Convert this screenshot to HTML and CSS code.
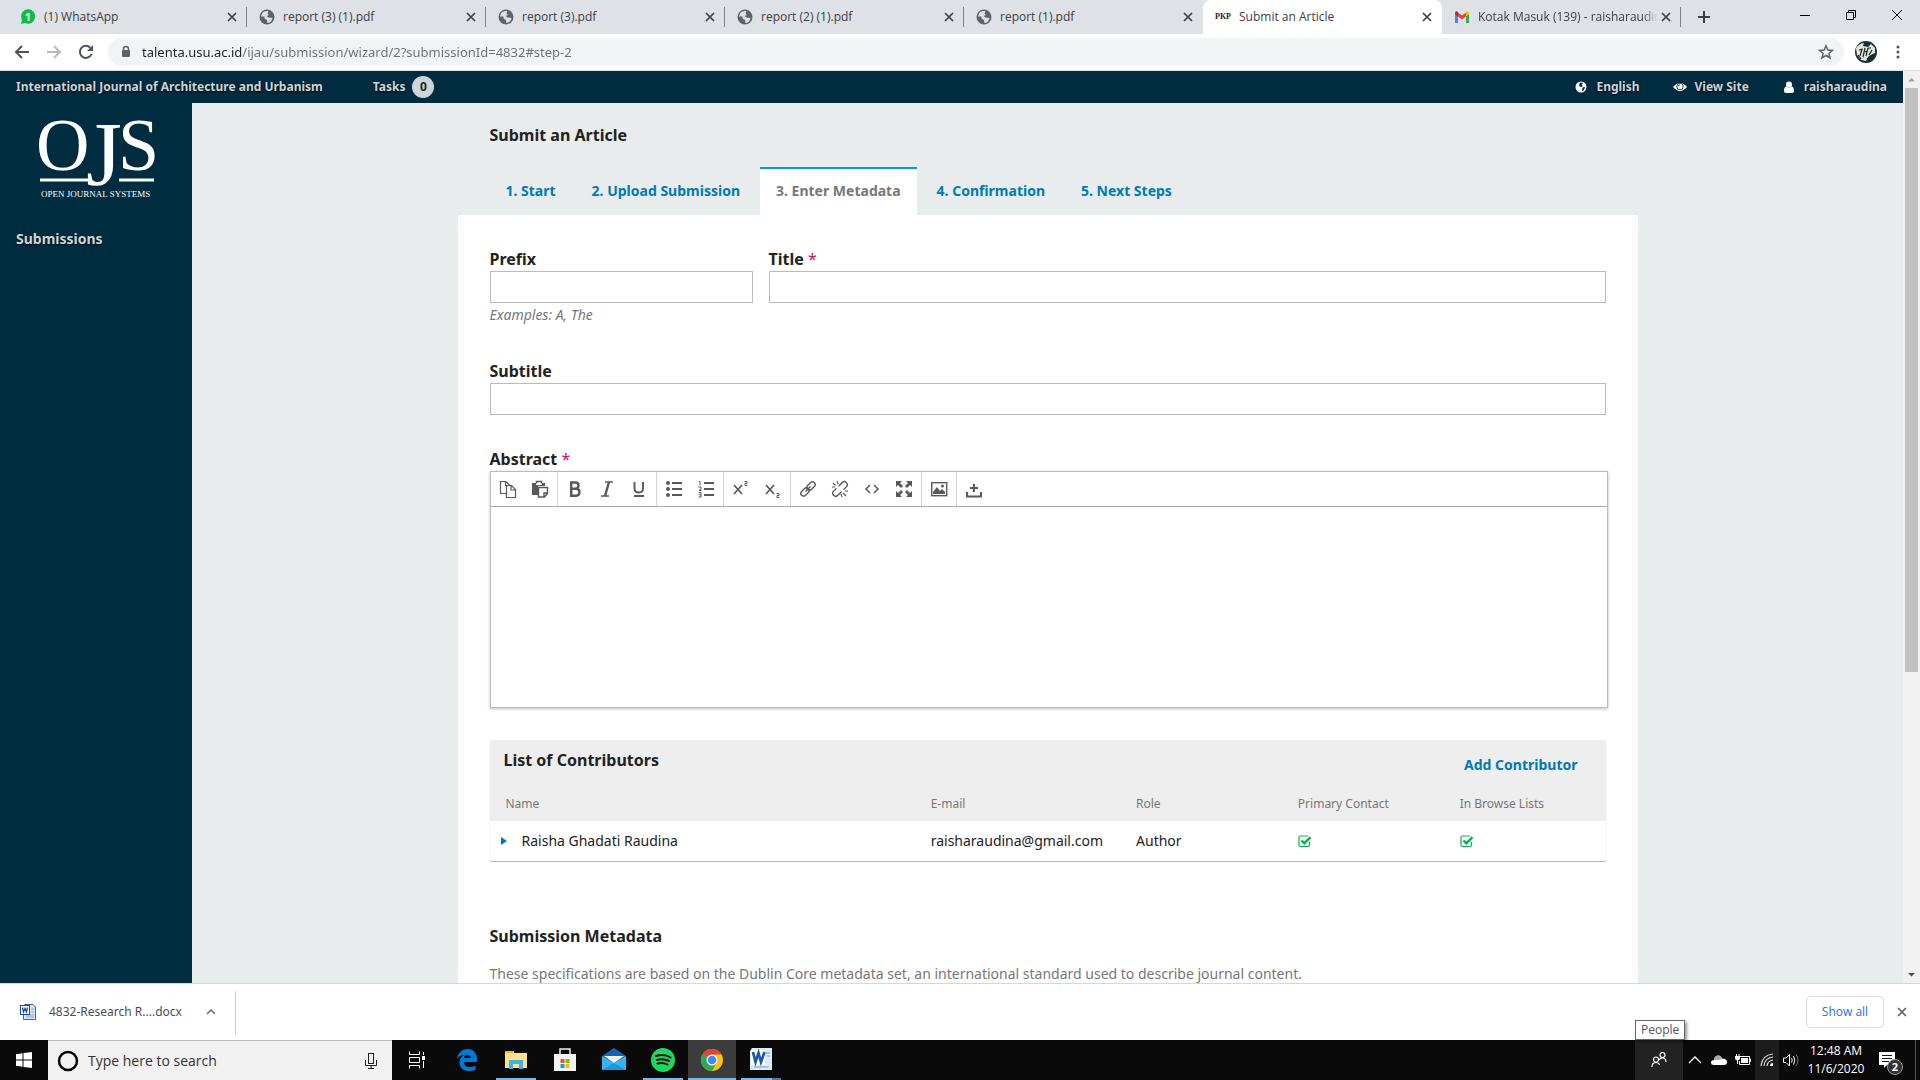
FILE: index.html
```html
<!DOCTYPE html>
<html lang="en">
<head>
<meta charset="utf-8">
<title>Submit an Article</title>
<link rel="stylesheet" href="styles.css">
</head>
<body>
<svg class="defs" aria-hidden="true">
  <symbol id="globe" viewBox="0 0 16 16"><circle cx="8" cy="8" r="7.5" fill="#5f6368"/><path d="M3 4.500C5 2 8 1.500 9.500 2.500L8.500 4.500 10 6 7.500 7 9.500 8.500 13.500 9C13 12 11 14 8.500 14L8 11 5.500 9.500 5.500 7.500 2 7.500Z" fill="#dee1e6"/></symbol>
  <symbol id="close" viewBox="0 0 10 10"><path d="M1 1 9 9M9 1 1 9" stroke="currentColor" stroke-width="1.7" fill="none"/></symbol>
</svg>

<header class="browser">
  <div class="tabstrip">
    <div class="tab">
      <svg class="fav" viewBox="0 0 16 16"><path d="M1 15 2 11A7 7.300 0 1 1 5 14Z" fill="#0bc143"/><text x="8" y="12" text-anchor="middle" class="fav-one">1</text></svg>
      <span class="tab-title">(1) WhatsApp</span><button class="tab-close" aria-label="Close tab"><svg><use href="#close"/></svg></button>
    </div>
    <div class="tab"><svg class="fav"><use href="#globe"/></svg><span class="tab-title">report (3) (1).pdf</span><button class="tab-close" aria-label="Close tab"><svg><use href="#close"/></svg></button></div>
    <div class="tab"><svg class="fav"><use href="#globe"/></svg><span class="tab-title">report (3).pdf</span><button class="tab-close" aria-label="Close tab"><svg><use href="#close"/></svg></button></div>
    <div class="tab"><svg class="fav"><use href="#globe"/></svg><span class="tab-title">report (2) (1).pdf</span><button class="tab-close" aria-label="Close tab"><svg><use href="#close"/></svg></button></div>
    <div class="tab before-active"><svg class="fav"><use href="#globe"/></svg><span class="tab-title">report (1).pdf</span><button class="tab-close" aria-label="Close tab"><svg><use href="#close"/></svg></button></div>
    <div class="tab active"><span class="fav fav-pkp">PKP</span><span class="tab-title">Submit an Article</span><button class="tab-close" aria-label="Close tab"><svg><use href="#close"/></svg></button></div>
    <div class="tab">
      <svg class="fav" viewBox="0 0 16 16"><path d="M1 3.500V14H4V7L1 4Z" fill="#4285f4"/><path d="M12 7V14H15V4Z" fill="#34a853"/><path d="M4 3.500 8 6.500 12 3.500V7.500L8 10.500 4 7.500Z" fill="#ea4335"/><path d="M1 4.500C1 2 3 1.800 4 3.200V7.500L1 5.300Z" fill="#c5221f"/><path d="M15 4.500C15 2 13 1.800 12 3.200V7.500L15 5.300Z" fill="#fbbc04"/></svg>
      <span class="tab-title fade">Kotak Masuk (139) - raisharaudin</span><button class="tab-close" aria-label="Close tab"><svg><use href="#close"/></svg></button>
    </div>
    <button class="new-tab" aria-label="New tab"><svg viewBox="0 0 14 14"><path d="M7 1V13M1 7H13" stroke="#3c4043" stroke-width="2"/></svg></button>
    <div class="window-controls">
      <button aria-label="Minimize"><svg viewBox="0 0 12 12"><path d="M1 6.500H11" stroke="#000"/></svg></button>
      <button aria-label="Restore"><svg viewBox="0 0 12 12"><path d="M1.500 3.500H8.500V10.500H1.500ZM3.500 3.500V1.500H10.500V8.500H8.500" fill="none" stroke="#000"/></svg></button>
      <button aria-label="Close"><svg viewBox="0 0 12 12"><path d="M1 1 11 11M11 1 1 11" stroke="#000"/></svg></button>
    </div>
  </div>
  <div class="toolbar">
    <button class="nav-btn" aria-label="Back"><svg viewBox="0 0 16 16"><path d="M15 8H2M8 2 2 8 8 14" fill="none" stroke="#50545a" stroke-width="2"/></svg></button>
    <button class="nav-btn" aria-label="Forward"><svg viewBox="0 0 16 16"><path d="M1 8H14M8 2 14 8 8 14" fill="none" stroke="#b9bbbe" stroke-width="2"/></svg></button>
    <button class="nav-btn" aria-label="Reload"><svg viewBox="0 0 16 16"><path d="M13.500 10A6 6 0 1 1 12.300 3.800" fill="none" stroke="#50545a" stroke-width="2"/><path d="M15 1V7H9Z" fill="#50545a"/></svg></button>
    <div class="omnibox">
      <svg class="lock" viewBox="0 0 10 14"><path d="M2.500 6V4A2.500 2.500 0 0 1 7.500 4V6" fill="none" stroke="#5f6368" stroke-width="1.500"/><rect x="1" y="5" width="8" height="7" rx="1" fill="#5f6368"/></svg>
      <input class="url" type="text" aria-label="Address" value="talenta.usu.ac.id/ijau/submission/wizard/2?submissionId=4832#step-2">
      <button class="star" aria-label="Bookmark"><svg viewBox="0 0 16 16"><path d="M8 1.800 9.800 6 14.400 6.400 10.900 9.400 12 14 8 11.500 4 14 5.100 9.400 1.600 6.400 6.200 6Z" fill="none" stroke="#5f6368" stroke-width="1.500"/></svg></button>
    </div>
    <button class="avatar" aria-label="Profile"><svg viewBox="0 0 22 22"><circle cx="11" cy="11" r="11" fill="#16303a"/><path d="M1 7Q5 2 9 2L8 5 13 6 16 3 20 7 20 12 14 15 11 20 6 19 2 14Z" fill="#e6e6d6"/><path d="M4 9 8 8M7 8 5 15M10 7 8 16M10 11 12 10M13 7 11 15M13 7 16 7M17 9 14 14M3 14 6 18M12 18 19 13" stroke="#17262d" stroke-width="1.200" fill="none"/></svg></button>
    <button class="menu" aria-label="Menu"><svg viewBox="0 0 4 16"><circle cx="2" cy="3" r="1.500"/><circle cx="2" cy="8" r="1.500"/><circle cx="2" cy="13" r="1.500"/></svg></button>
  </div>
</header>

<div class="viewport">
  <div class="page">
    <nav class="site-nav">
      <a href="#" class="journal">International Journal of Architecture and Urbanism</a>
      <a href="#" class="tasks">Tasks <span class="count">0</span></a>
      <div class="user-nav">
        <a href="#"><svg viewBox="0 0 12 12"><circle cx="6" cy="6" r="5.500" fill="#fff"/><path d="M5 1.500 8 2 6.500 4 8 5 6 6 4 5ZM7.500 6.500 10 6 9 9 7 10.500Z" fill="#002c40"/></svg>English</a>
        <a href="#"><svg viewBox="0 0 14 12"><path d="M0 6Q7-2 14 6 7 14 0 6Z" fill="#fff"/><circle cx="7" cy="5.500" r="3.500" fill="#002c40"/><circle cx="7" cy="5.500" r="2.700" fill="#fff"/><path d="M5.300 5.500A1.700 1.700 0 0 1 7 3.800" stroke="#002c40" fill="none" stroke-width=".7"/></svg>View Site</a>
        <a href="#"><svg viewBox="0 0 10 12"><circle cx="5" cy="3.500" r="3" fill="#fff"/><path d="M0 10Q0 5.500 2.500 5.500 5 7.500 7.500 5.500 10 5.500 10 10 10 12 8 12H2Q0 12 0 10Z" fill="#fff"/></svg>raisharaudina</a>
      </div>
    </nav>
    <div class="columns">
      <aside class="sidebar">
        <a href="#" class="logo" aria-label="Open Journal Systems">
          <svg viewBox="0 0 128 84"><g fill="#fff" font-family="Liberation Serif, serif"><text x="4" y="57" font-size="74">O</text><text x="54" y="72" font-size="92">J</text><text x="86" y="57" font-size="74">S</text><text x="9" y="84" font-size="9">OPEN JOURNAL SYSTEMS</text></g><path d="M8 67H56M87 67H122" stroke="#fff" stroke-width="3"/></svg>
        </a>
        <a href="#" class="side-link">Submissions</a>
      </aside>
      <main class="content">
        <div class="wizard">
          <h1>Submit an Article</h1>
          <nav class="steps">
            <a href="#">1. Start</a>
            <a href="#">2. Upload Submission</a>
            <a href="#" class="current">3. Enter Metadata</a>
            <a href="#">4. Confirmation</a>
            <a href="#">5. Next Steps</a>
          </nav>
          <form class="panel">
            <div class="row">
              <div class="field prefix"><label for="prefix">Prefix</label><input id="prefix" type="text"><p class="hint">Examples: A, The</p></div>
              <div class="field title"><label for="title">Title <span class="req">*</span></label><input id="title" type="text"></div>
            </div>
            <div class="field subtitle"><label for="subtitle">Subtitle</label><input id="subtitle" type="text"></div>
            <div class="field abstract">
              <label for="abstract">Abstract <span class="req">*</span></label>
              <div class="editor">
                <div class="editor-bar">
                  <div class="group">
                    <button type="button" aria-label="Copy"><svg viewBox="0 0 18 18"><path d="M7 13.500H1.500V1.500H7L10.500 5V6M6.500 1.500V5.500H10M7.500 5.500H12.500L16.500 9.500V17.500H7.500ZM12 6V10H16" fill="none" stroke="#595959" stroke-width="1.200"/></svg></button>
                    <button type="button" aria-label="Paste"><svg viewBox="0 0 18 18"><path d="M1 3H5V5H11V3H14V6H7V15H1Z" fill="#595959"/><path d="M5.500 3.500V1.500H10.500V3.500" fill="none" stroke="#595959" stroke-width="1.500"/><path d="M7.500 7.500H16.500V13.500L13.500 17H7.500ZM13 16.500V13H16" fill="#fff" stroke="#595959" stroke-width="1.400"/></svg></button>
                  </div>
                  <div class="group">
                    <button type="button" aria-label="Bold"><svg viewBox="0 0 18 18"><path d="M5.200 2.500H9.500Q12.500 2.500 12.500 5.500T9.500 8.800H5.200ZM5.200 8.800H10Q13.500 8.800 13.500 12.200T10 15.700H5.200Z" fill="none" stroke="#595959" stroke-width="2.400"/></svg></button>
                    <button type="button" aria-label="Italic"><svg viewBox="0 0 18 18"><path d="M7 2H15M3 16H11" stroke="#595959" stroke-width="1.400"/><path d="M11 2 7 16" stroke="#595959" stroke-width="2.400"/></svg></button>
                    <button type="button" aria-label="Underline"><svg viewBox="0 0 18 18"><path d="M4.500 2V8.500Q4.500 12.500 8.700 12.500T13 8.500V2M4 16H14" fill="none" stroke="#595959" stroke-width="1.900"/></svg></button>
                  </div>
                  <div class="group">
                    <button type="button" aria-label="Bullet list"><svg viewBox="0 0 18 18"><g fill="#595959"><circle cx="3" cy="3" r="2"/><circle cx="3" cy="9" r="2"/><circle cx="3" cy="15" r="2"/></g><path d="M7 3H17M7 9H17M7 15H17" stroke="#595959" stroke-width="2"/></svg></button>
                    <button type="button" aria-label="Numbered list"><svg viewBox="0 0 18 18"><path d="M7 3H17M7 9H17M7 15H17" stroke="#595959" stroke-width="2"/><path d="M2 1.500H3V5.500M1.500 7H4V9L2 10.500H4.500M1.500 12.500H4V17H1.500M2 14.700H4" fill="none" stroke="#595959"/></svg></button>
                  </div>
                  <div class="group">
                    <button type="button" aria-label="Superscript"><svg viewBox="0 0 18 18"><path d="M2 5 10 14M10 5 2 14" stroke="#595959" stroke-width="1.700"/><path d="M12.500 1.500H15V3.500H13V5.500H15.500" stroke="#595959" fill="none"/></svg></button>
                    <button type="button" aria-label="Subscript"><svg viewBox="0 0 18 18"><path d="M2 5 10 14M10 5 2 14" stroke="#595959" stroke-width="1.700"/><path d="M12.500 13.500H15V15.500H13V17.500H15.500" stroke="#595959" fill="none"/></svg></button>
                  </div>
                  <div class="group">
                    <button type="button" aria-label="Insert link"><svg viewBox="0 0 18 18"><g fill="none" stroke="#595959" stroke-width="1.400" transform="rotate(-45 9 9)"><rect x="0" y="6.200" width="9.500" height="5.600" rx="2.800"/><rect x="8.500" y="6.200" width="9.500" height="5.600" rx="2.800"/><path d="M5.500 9H12.500"/></g></svg></button>
                    <button type="button" aria-label="Remove link"><svg viewBox="0 0 18 18"><g fill="none" stroke="#595959" stroke-width="1.400"><g transform="rotate(-45 9 9)"><path d="M7 6H3A3 3 0 0 0 3 12H8M11 12H15A3 3 0 0 0 15 6H10"/></g><path d="M6 1 7 4M2 3 4.500 5.500M1 7H4M14 11H17M12 13 15 16M10 14 11 17" stroke-width="1.200"/></g></svg></button>
                    <button type="button" aria-label="Source code"><svg viewBox="0 0 18 18"><path d="M7 5 3 9 7 13M11 5 15 9 11 13" fill="none" stroke="#595959" stroke-width="1.500"/></svg></button>
                    <button type="button" aria-label="Fullscreen"><svg viewBox="0 0 18 18"><path d="M1 1H7L5 3 8 6 6 8 3 5 1 7ZM17 1V7L15 5 12 8 10 6 13 3 11 1ZM1 17V11L3 13 6 10 8 12 5 15 7 17ZM17 17H11L13 15 10 12 12 10 15 13 17 11Z" fill="#595959"/></svg></button>
                  </div>
                  <div class="group">
                    <button type="button" aria-label="Image"><svg viewBox="0 0 18 18"><rect x="1.700" y="2.700" width="15" height="13" fill="none" stroke="#595959" stroke-width="1.400"/><path d="M3 14V12L7 7 10 11 12 9 15 12V14Z" fill="#595959"/><circle cx="12.500" cy="6" r="1.500" fill="#595959"/></svg></button>
                  </div>
                  <div class="group last">
                    <button type="button" aria-label="Upload"><svg viewBox="0 0 18 18"><path d="M2 12V16.500H16V12M9 4V12M5 8H13" fill="none" stroke="#595959" stroke-width="2"/></svg></button>
                  </div>
                </div>
                <textarea id="abstract"></textarea>
              </div>
            </div>

            <section class="contributors">
              <div class="grid-head"><h2>List of Contributors</h2><a href="#">Add Contributor</a></div>
              <table>
                <colgroup><col class="c-name"><col class="c-mail"><col class="c-role"><col class="c-contact"><col class="c-browse"></colgroup>
                <thead><tr><th>Name</th><th>E-mail</th><th>Role</th><th>Primary Contact</th><th>In Browse Lists</th></tr></thead>
                <tbody><tr>
                  <td class="name"><a href="#" aria-label="Show actions"><svg viewBox="0 0 6 8"><path d="M0 0 6 4 0 8Z" fill="#007ab2"/></svg></a>Raisha Ghadati Raudina</td>
                  <td>raisharaudina@gmail.com</td><td>Author</td>
                  <td><input type="checkbox" checked aria-label="Primary Contact"></td>
                  <td><input type="checkbox" checked aria-label="In Browse Lists"></td>
                </tr></tbody>
              </table>
            </section>

            <h2 class="meta-title">Submission Metadata</h2>
            <p class="meta-text">These specifications are based on the Dublin Core metadata set, an international standard used to describe journal content.</p>
          </form>
        </div>
      </main>
    </div>
  </div>
  <div class="scrollbar">
    <svg viewBox="0 0 17 17"><path d="M5 10.500 8.500 7 12 10.500Z" fill="#a3a3a3"/></svg>
    <div class="thumb"></div>
    <svg class="down" viewBox="0 0 17 17"><path d="M5 7 8.500 10.500 12 7Z" fill="#505050"/></svg>
  </div>
</div>

<div class="downloads">
  <button class="file">
    <svg class="doc" viewBox="0 0 16 16"><path d="M4.500.5H13L15.500 3V15.500H3.500V9" fill="#dbe8f8" stroke="#3c63ac"/><path d="M11 5H14M11 8H14M6 11H14M6 13H14" stroke="#7fa3d8"/><rect x=".5" y="1.500" width="9" height="9" fill="#fff" stroke="#1d4696"/><path d="M2.500 3.500 3.500 8 5 4.500 6.500 8 7.500 3.500" fill="none" stroke="#1d4696" stroke-width="1.300"/></svg>
    <span>4832-Research R....docx</span>
    <svg class="chev" viewBox="0 0 10 6"><path d="M1 5 5 1 9 5" fill="none" stroke="#70757a" stroke-width="1.700"/></svg>
  </button>
  <button class="show-all">Show all</button>
  <button class="dismiss" aria-label="Close"><svg><use href="#close"/></svg></button>
</div>

<footer class="taskbar">
  <button class="start" aria-label="Start"><svg viewBox="0 0 16 16"><path d="M0 2.200 6.500 1.300V7.500H0ZM7.500 1.100 16 0V7.500H7.500ZM0 8.500H6.500V14.700L0 13.800ZM7.500 8.500H16V16L7.500 14.900Z" fill="#fff"/></svg></button>
  <div class="search">
    <svg class="cortana" viewBox="0 0 22 22"><circle cx="11" cy="11" r="9" fill="none" stroke="#000" stroke-width="2.500"/></svg>
    <input type="text" aria-label="Search" placeholder="Type here to search">
    <svg class="mic" viewBox="0 0 12 18"><rect x="3.500" y="1.500" width="5" height="10" fill="none" stroke="#222"/><path d="M.5 8V13.500H11.500V8M6 13.500V16.500M3 16.500H9" fill="none" stroke="#222"/></svg>
  </div>
  <div class="apps">
    <button aria-label="Task View"><svg viewBox="0 0 24 24"><path d="M3.500 3.500V6.500H13.500V3.500M3.500 20.500V17.500H13.500V20.500M3.500 9.500H13.500V14.500H3.500ZM17.500 4V7M17.500 13V20" fill="none" stroke="#fff"/><rect x="16" y="8" width="3" height="4" fill="#fff"/></svg></button>
    <button aria-label="Edge"><svg viewBox="0 0 24 24"><path d="M2 11C3 4 8 1 12.500 1 19 1 22 6 22 11V14H9C9.500 20 16 20 20.500 17.500V21.500C14 25 4.500 23 4.500 14.500 4.500 11 6.500 8.500 9.500 7 5.500 7 3 9.500 2 11ZM9 10H16C16 5.500 9.500 5.500 9 10Z" fill="#0078d7"/></svg></button>
    <button class="open" aria-label="File Explorer"><svg viewBox="0 0 24 24"><path d="M1 3H10V5H23V20H1Z" fill="#ffe08a"/><path d="M1 3H10V5H1Z" fill="#f5b91e"/><path d="M5 21V12H19V21H15V16H9V21Z" fill="#3cb0e8"/></svg></button>
    <button aria-label="Microsoft Store"><svg viewBox="0 0 24 24"><path d="M7 7V1H17V7" fill="none" stroke="#eee" stroke-width="1.500"/><path d="M1 6H23V23H1Z" fill="#f3f3f3"/><path d="M7.500 11H11.500V15H7.500Z" fill="#f25022"/><path d="M12.500 11H16.500V15H12.500Z" fill="#7fba00"/><path d="M7.500 16H11.500V20H7.500Z" fill="#00a4ef"/><path d="M12.500 16H16.500V20H12.500Z" fill="#ffb900"/></svg></button>
    <button aria-label="Mail"><svg viewBox="0 0 24 24"><path d="M0 8 12 0 24 8V22H0Z" fill="#0f66b5"/><path d="M0 8 12 15 24 8V22H0Z" fill="#35b5f0"/><path d="M2 8H22L12 15Z" fill="#f4f4f4"/><path d="M0 22 12 15 24 22Z" fill="#1c97dd"/></svg></button>
    <button class="open" aria-label="Spotify"><svg viewBox="0 0 24 24"><circle cx="12" cy="12" r="12" fill="#1ed760"/><path d="M5 8Q13 5.500 19.500 9.500M6 12Q12 10 18 13M6.500 15.500Q12 14 16.500 16.500" fill="none" stroke="#0c0c0c" stroke-width="2" stroke-linecap="round"/></svg></button>
    <button class="open focused" aria-label="Chrome"><svg viewBox="0 0 24 24"><circle cx="12" cy="12" r="11" fill="#fbc116"/><path d="M12 12 2.500 6.500A11 11 0 0 0 12 23L17 14Z" fill="#2da94f"/><path d="M12 12 2.500 6.500A11 11 0 0 1 21.500 6.500H12Z" fill="#db4437"/><circle cx="12" cy="12" r="5.500" fill="#fff"/><circle cx="12" cy="12" r="4.300" fill="#4285f4"/></svg></button>
    <button class="open multi" aria-label="Word"><svg viewBox="0 0 24 24"><path d="M3 0H23V22H1V3Z" fill="#dfe9f6"/><path d="M2 2H16V17H2Z" fill="#fff"/><path d="M4 4 6.500 14 9.500 5 12 14 15.500 4" fill="none" stroke="#1d55a8" stroke-width="2.700"/><path d="M17 5H21M18 8H21M5 19H20" stroke="#7ba2d6"/></svg></button>
  </div>
  <div class="tray">
    <button class="people" aria-label="People"><svg viewBox="0 0 16 16"><g fill="none" stroke="#fff" stroke-width="1.200"><circle cx="5" cy="7.500" r="2.500"/><path d="M1 15Q1 10.500 5 10.500 8 10.500 8.500 13"/><circle cx="11.500" cy="3" r="2.500"/><path d="M8 8Q9 6 11.500 6 15 6 15 10"/></g></svg><span class="tooltip">People</span></button>
    <button aria-label="Show hidden icons"><svg viewBox="0 0 16 16"><path d="M2 11 8 5 14 11" fill="none" stroke="#fff" stroke-width="1.300"/></svg></button>
    <button aria-label="OneDrive"><svg viewBox="0 0 16 16"><path d="M3 13Q0 13 0 10.500T3 8Q3 4 7 3.500 10 3.500 11 6.500 16 6.500 16 10 16 13 13 13Z" fill="#fff"/><path d="M3 8Q3 4 7 3.500 10 3.500 11 6.500L8 8Z" fill="#aaa"/></svg></button>
    <button aria-label="Battery"><svg viewBox="0 0 16 16"><path d="M5 4.500H14.500V12.500H4.500V9M14.500 7H15.500V10" fill="none" stroke="#fff"/><path d="M6 6H13V11H6ZM0 4H5V7L3 8.500V12H2V8.500L0 7ZM1 2H2V4H1ZM3.500 2H4.500V4H3.500Z" fill="#fff"/></svg></button>
    <button class="lit" aria-label="Network"><svg viewBox="0 0 16 16"><g fill="none" stroke="#ddd" stroke-width="1.200"><path d="M2 14Q3 3 14 2M5 14Q5.500 6 14 5M8 14Q8.500 9 14 8"/></g><path d="M11 14Q11 11 14 11V14Z" fill="#fff"/></svg></button>
    <button aria-label="Volume"><svg viewBox="0 0 16 16"><g fill="none" stroke="#fff"><path d="M.5 6V10.500H3L6.500 14V2.500L3 6ZM8.500 6Q10 8 8.500 10.500M10.500 4Q13 8 10.500 12.500"/><path d="M13 2.500Q17 8 13 14" stroke="#777"/></g></svg></button>
    <div class="clock"><span>12:48 AM</span><span>11/6/2020</span></div>
    <button class="notices" aria-label="Notifications"><svg viewBox="0 0 16 16"><path d="M0 0H16V13H8L5 16V13H0Z" fill="#fff"/><path d="M3 3.500H13M3 6.500H13M3 9.500H10" stroke="#111" stroke-width="1.200"/></svg><span class="badge">2</span></button>
  </div>
</footer>
</body>
</html>
```

FILE: styles.css
```css
* { box-sizing: border-box; }
body {
  margin: 0; height: 100vh; display: flex; flex-direction: column; overflow: hidden;
  background: #fff; color: #222; font-family: "Noto Sans", sans-serif; font-size: 14px; line-height: 20px;
}
button { border: 0; padding: 0; background: none; font: inherit; color: inherit; display: flex; align-items: center; justify-content: center; }
input, textarea { font: inherit; }
a { color: #007ab2; text-decoration: none; }
h1, h2, p { margin: 0; }
svg { display: block; flex: none; }
.defs { position: absolute; width: 0; height: 0; }

/* Browser chrome */
.browser, .downloads, .taskbar { flex: none; font-family: "Open Sans", sans-serif; }
.tabstrip { height: 34px; display: flex; background: #dee1e6; padding-left: 8px; color: #3c4043; font-size: 12px; }
.tab { position: relative; flex: 0 1 239px; min-width: 0; display: flex; align-items: center; padding: 0 10px 0 12px; }
.tab::after { content: ""; position: absolute; right: 0; top: 7px; width: 1px; height: 20px; background: #80848a; }
.tab.active { background: #fff; border-radius: 8px 8px 0 0; }
.tab.active::after, .tab.before-active::after { display: none; }
.fav { width: 16px; height: 16px; margin-right: 8px; }
.fav-one { font: bold 11px "Open Sans", sans-serif; fill: #fff; }
.fav-pkp { font: bold 8px/16px "Liberation Serif", serif; color: #222; }
.tab-title { flex: 1; white-space: nowrap; }
.tab-title.fade { -webkit-mask-image: linear-gradient(90deg, #000 165px, transparent 180px); mask-image: linear-gradient(90deg, #000 165px, transparent 180px); min-width: 0; }
.tab-close { width: 10px; height: 10px; color: #3c4043; }
.tab-close svg { width: 10px; height: 10px; }
.new-tab { width: 46px; }
.new-tab svg { width: 14px; height: 14px; }
.window-controls { margin-left: auto; display: flex; height: 29px; }
.window-controls button { width: 46px; }
.window-controls svg { width: 12px; height: 12px; }
.toolbar { height: 37px; display: flex; align-items: center; padding: 0 20px 1px 6px; border-bottom: 1px solid #dadce0; }
.nav-btn { width: 32px; height: 28px; }
.nav-btn svg { width: 16px; height: 16px; }
.omnibox { flex: 1; height: 28px; display: flex; align-items: center; margin-left: 6px; padding: 0 10px 0 13px; border-radius: 14px; background: #f1f3f4; }
.lock { width: 10px; height: 14px; margin-right: 11px; }
.url {
  flex: 1; border: 0; padding: 0; height: 20px; font-family: "Noto Sans", sans-serif; font-size: 13px; color: transparent;
  background: linear-gradient(90deg, #202124 100px, #6b6f74 100px); -webkit-background-clip: text; background-clip: text;
}
.star svg { width: 16px; height: 16px; }
.avatar { width: 22px; margin: 0 19px 0 11px; }
.avatar svg { width: 22px; height: 22px; }
.menu svg { width: 4px; height: 16px; fill: #50545a; }

/* Page */
.viewport { flex: 1; min-height: 0; display: flex; }
.page { flex: 1; min-width: 0; display: flex; flex-direction: column; overflow: hidden; background: #e8eced; }
.site-nav { flex: none; height: 32px; display: flex; align-items: center; padding: 0 16px; background: #002c40; font-size: 12px; font-weight: 700; text-shadow: 0 1px 2px #000; }
.site-nav a { display: flex; align-items: center; color: #ccd5d9; }
.tasks { margin-left: 50px; gap: 7px; }
.count { width: 22px; height: 22px; border-radius: 11px; background: #ccd5d9; color: #222; line-height: 22px; text-align: center; text-shadow: none; }
.user-nav { margin-left: auto; display: flex; gap: 33px; }
.user-nav a { gap: 8px; }
.user-nav svg { height: 12px; width: 14px; }
.columns { flex: 1; min-height: 0; display: flex; }
.sidebar { flex: none; width: 192px; background: #002c40; }
.logo { display: block; padding: 10px 32px 0; }
.logo svg { width: 128px; height: 84px; overflow: visible; }
.side-link { display: block; margin-top: 32px; padding: 0 16px; color: #ccd5d9; font-weight: 700; text-shadow: 0 1px 2px #000; }
.content { flex: 1; min-width: 0; }
.wizard { max-width: 1180px; margin: 0 auto; }
h1, h2, label { font-size: 16px; line-height: 24px; font-weight: 700; }
h1 { padding: 20px 32px; }
.steps { display: flex; gap: 4px; padding: 0 32px; font-weight: 700; }
.steps a { height: 48px; padding: 12px 16px; border-top: 2px solid transparent; }
.steps .current { background: #fff; border-top-color: #009de5; color: #777; }
.panel { padding: 32px; background: #fff; }
.row { display: flex; gap: 16px; height: 112px; }
.field { display: flex; flex-direction: column; }
.prefix { width: 263px; }
.title { flex: 1; }
.field input { height: 32px; border: 1px solid #bbb; padding: 0 8px; background: #fff; }
.req { color: #d00a6c; font-weight: 400; }
.hint { font-style: italic; color: #777; padding-top: 2px; }
.subtitle { margin-bottom: 32px; }
.editor { margin-right: -2px; border: 1px solid #bbb; box-shadow: 0 1px 3px rgba(0, 0, 0, .25); display: flex; flex-direction: column; }
.editor-bar { display: flex; height: 35px; border-bottom: 1px solid #aaa; }
.group { display: flex; padding: 0 1px; border-right: 1px solid #d4d4d4; }
.group.last { border: 0; }
.group button { width: 32px; }
.group svg { width: 18px; height: 18px; }
.editor textarea { border: 0; height: 200px; padding: 8px; resize: none; }
.contributors { margin-top: 32px; border-radius: 2px; box-shadow: 0 1px 1px rgba(0, 0, 0, .3); overflow: hidden; }
.grid-head { display: flex; justify-content: space-between; height: 48px; padding: 8px 28px 0 14px; background: #eee; }
.grid-head a { font-weight: 700; padding-top: 7px; }
table { width: 100%; border-collapse: collapse; table-layout: fixed; }
th { height: 33px; padding: 0 0 2px 16px; background: #eee; color: #777; font-size: 12px; font-weight: 400; text-align: left; }
td { height: 40px; padding: 0 0 0 16px; }
.c-name { width: 38.1%; } .c-mail { width: 18.4%; } .c-role { width: 14.5%; } .c-contact { width: 14.5%; }
td.name { padding-left: 11px; }
.name a { display: inline-block; width: 21px; }
.name svg { width: 6px; height: 8px; margin-bottom: 1px; }
input[type="checkbox"] {
  appearance: none; display: block; width: 14px; height: 14px; margin: 0;
  background: url("data:image/svg+xml,%3Csvg xmlns='http://www.w3.org/2000/svg' viewBox='0 0 14 14'%3E%3Cpath d='M11.500 8V11Q11.500 12.500 10 12.500H2.500Q1 12.500 1 11V3.500Q1 2 2.500 2H10' fill='none' stroke='%2300b24e' stroke-width='1.200'/%3E%3Cpath d='M3.500 6.500 6.300 9.300 12.500 3.200' fill='none' stroke='%2300b24e' stroke-width='2.400'/%3E%3C/svg%3E");
}
.meta-title { margin-top: 63px; }
.meta-text { margin-top: 16px; color: #777; }
.scrollbar { flex: none; width: 17px; display: flex; flex-direction: column; background: #f1f1f1; }
.scrollbar svg { width: 17px; height: 17px; }
.thumb { flex: 0 0 64%; margin: 0 2px; background: #c1c1c1; }
.scrollbar .down { margin-top: auto; }

/* Download shelf */
.downloads { height: 57px; display: flex; align-items: center; border-top: 1px solid #d5d7da; padding-right: 12px; font-size: 12px; color: #4a4d51; }
.file { height: 43px; padding: 0 19px 0 20px; border-right: 1px solid #ccc; margin-right: auto; font-family: "Noto Sans", sans-serif; }
.doc { width: 16px; height: 16px; margin-right: 13px; }
.chev { width: 10px; height: 6px; margin-left: 24px; }
.show-all { width: 78px; height: 32px; border: 1px solid #dadce0; border-radius: 4px; color: #1a73e8; }
.dismiss { width: 12px; margin-left: 12px; color: #5f6368; }
.dismiss svg { width: 10px; height: 10px; }

/* Taskbar */
.taskbar { height: 40px; display: flex; background: #0a0a0a; color: #fff; }
.start { width: 48px; }
.start svg { width: 16px; height: 16px; }
.search { width: 344px; display: flex; align-items: center; padding: 0 15px 0 9px; background: #f1f1f1; border-top: 1px solid #bbb; }
.cortana { width: 22px; height: 22px; margin-right: 9px; }
.search input { flex: 1; min-width: 0; border: 0; padding: 0; background: none; font-size: 14px; }
.search input::placeholder { color: #333; opacity: 1; }
.mic { width: 12px; height: 18px; }
.apps { display: flex; gap: 1px; padding-left: 2px; }
.apps button { position: relative; width: 48px; }
.apps svg { width: 24px; height: 24px; }
.open::after { content: ""; position: absolute; left: 4px; right: 4px; bottom: 0; height: 2px; background: #76b9ed; }
.focused { background: #3c3c3c; }
.focused::after { left: 0; right: 0; }
.multi::after { background: linear-gradient(90deg, #76b9ed 78%, #50799c 78%); }
.tray { margin-left: auto; display: flex; margin-right: 4px; border-right: 1px solid #555; }
.tray button { width: 24px; }
.tray svg { width: 16px; height: 16px; }
.tray .people { position: relative; width: 48px; background: #222; }
.tooltip { position: absolute; left: 0; bottom: 40px; padding: 0 5px; border: 1px solid #666; background: #fff; color: #555; font-size: 12px; line-height: 18px; box-shadow: 2px 2px 3px rgba(0, 0, 0, .4); }
.tray .lit { background: #1c1c1c; }
.clock { width: 66px; display: flex; flex-direction: column; justify-content: center; text-align: center; font-size: 12px; line-height: 18px; }
.tray .notices { position: relative; width: 46px; padding-right: 10px; }
.badge { position: absolute; left: 18px; top: 19px; width: 16px; height: 16px; border: 1px solid #999; border-radius: 8px; background: #333; font-size: 11px; font-weight: 700; line-height: 14px; }
```
